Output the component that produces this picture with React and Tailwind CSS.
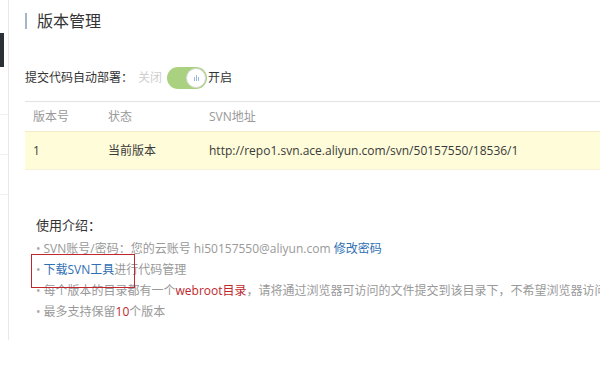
import React from 'react';

const font = { fontFamily: '"Open Sans", "Noto Sans CJK SC", sans-serif' };

const Toggle = () => (
  <div className="relative w-[40px] h-[22px] rounded-full bg-[#a9d17f]">
    <div className="absolute right-[1px] top-[1px] w-[20px] h-[20px] rounded-full bg-white border border-[#d9d9d9] flex items-center justify-center">
      <div className="flex gap-[1px] items-end h-[6px]">
        <span className="w-px h-[4px] bg-[#9bb8e0]" />
        <span className="w-px h-[6px] bg-[#9bb8e0]" />
        <span className="w-px h-[4px] bg-[#9bb8e0]" />
      </div>
    </div>
  </div>
);

export default function App() {
  return (
    <div className="w-[600px] h-[370px] bg-white flex overflow-hidden text-[12px]" style={font}>
      {/* sidebar edge */}
      <div className="w-[9px] h-[340px] border-r border-[#e8e8e8] flex flex-col shrink-0">
        <div className="h-[33px]" />
        <div className="w-[4px] h-[34px] bg-[#2c3138]" />
        <div className="h-[48px] border-b border-[#f0f0f0]" />
        <div className="h-[40px] border-b border-[#f0f0f0]" />
        <div className="h-[40px] border-b border-[#f0f0f0]" />
      </div>

      <div className="flex-1 min-w-0 pl-[16px] pt-[10px]">
        <div className="flex items-center h-[22px]">
          <span className="w-[2px] h-[16px] bg-[#a5b6c6] mr-[10px]" />
          <h1 className="text-[16px] text-[#333] leading-none">版本管理</h1>
        </div>

        <div className="flex items-center h-[22px] mt-[35px] text-[#333]">
          <span>提交代码自动部署：</span>
          <span className="text-[#cfcfcf] ml-[5px] mr-[5px]">关闭</span>
          <Toggle />
          <span className="ml-[1px]">开启</span>
        </div>

        <div className="mt-[12px] border-t border-[#e3e3e3]">
          <div className="flex h-[30px] items-center text-[#999] border-b border-[#f3ecc7]">
            <span className="w-[83px] pl-[8px]">版本号</span>
            <span className="w-[101px]">状态</span>
            <span>SVN地址</span>
          </div>
          <div className="flex h-[38px] items-center text-[#3a3a3a] bg-[#fefcd9] border-b border-[#f6f2d8]">
            <span className="w-[83px] pl-[8px]">1</span>
            <span className="w-[101px]">当前版本</span>
            <span>http://repo1.svn.ace.aliyun.com/svn/50157550/18536/1</span>
          </div>
        </div>

        <div className="pl-[11px] mt-[45px]">
          <div className="text-[13px] text-[#333] leading-[20px]">使用介绍：</div>
          <ul className="mt-[3px] text-[#999] leading-[21px]">
            <li className="flex items-center">
              <span className="mr-[3px] text-[#aaa]">•</span>
              <span>SVN账号/密码：您的云账号 hi50157550@aliyun.com <span className="text-[#2f6fb3]">修改密码</span></span>
            </li>
            <li className="flex items-center relative">
              <span className="mr-[3px] text-[#aaa]">•</span>
              <span><span className="text-[#2f6fb3]">下载SVN工具</span>进行代码管理</span>
              <span className="absolute left-[-5px] top-[-5px] w-[104px] h-[34px] border border-[#c0282d]" />
            </li>
            <li className="flex items-center whitespace-nowrap">
              <span className="mr-[3px] text-[#aaa]">•</span>
              <span>每个版本的目录都有一个<span className="text-[#c0282d]">webroot目录</span>，请将通过浏览器可访问的文件提交到该目录下，不希望浏览器访问</span>
            </li>
            <li className="flex items-center">
              <span className="mr-[3px] text-[#aaa]">•</span>
              <span>最多支持保留<span className="text-[#c0282d]">10</span>个版本</span>
            </li>
          </ul>
        </div>
      </div>
    </div>
  );
}
